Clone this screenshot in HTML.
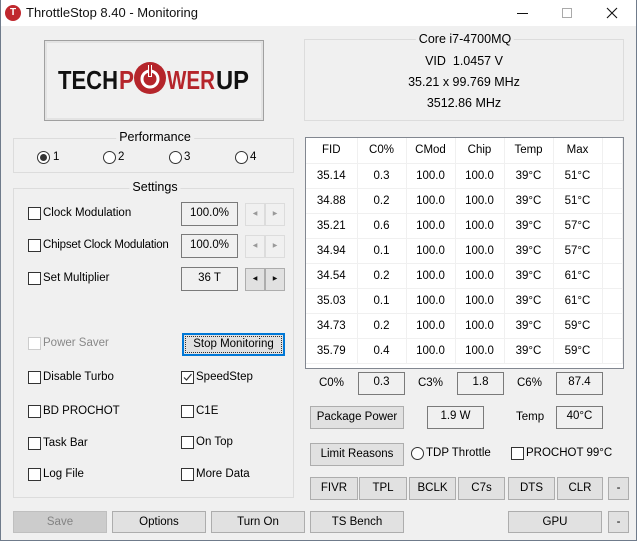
<!DOCTYPE html>
<html><head><meta charset="utf-8"><style>
*{box-sizing:border-box;margin:0;padding:0}
body{width:637px;height:541px;overflow:hidden;background:#f0f0f0;font-family:"Liberation Sans",Tahoma,sans-serif;font-size:11.5px;color:#000;position:relative}
.a{position:absolute}
.win{left:0;top:0;width:637px;height:541px;border:1px solid #6f7b8b;border-top:none}
.title{left:0;top:0;width:637px;height:26px;background:#fff}
.grp{position:absolute;border:1px solid #dcdcdc}
.gt{position:absolute;background:#f0f0f0;padding:0 3px;font-size:12.5px;top:-9px;transform:translateX(-50%);white-space:nowrap}
.cb{position:absolute;width:13px;height:13px;border:1px solid #333;background:#fff}
.lbl{position:absolute;white-space:nowrap}
.btn{position:absolute;background:#e1e1e1;border:1px solid #adadad;text-align:center;line-height:20px}
.box{position:absolute;border:1px solid #7a7a7a;background:#f0f0f0;text-align:center;line-height:18px}
.rad{position:absolute;width:13px;height:13px;border:1px solid #333;border-radius:50%;background:#fff}
.spin{position:absolute;width:20px;height:23px;border:1px solid #dcdcdc;background:#f0f0f0;font-size:6px;color:#999;text-align:center;line-height:21px}
table{border-collapse:collapse;table-layout:fixed}
td{width:49px;height:25px;text-align:center;border-right:1px solid #f0f0f0;border-bottom:1px solid #f0f0f0;font-size:11.5px;overflow:hidden}
</style></head><body>
<div class="a title"></div>
<div class="a win"></div>
<div class="a" style="left:5px;top:5px;width:16px;height:16px;border-radius:50%;background:#c0282e;color:#fff;font-weight:bold;font-size:10px;text-align:center;line-height:16px">T</div>
<div class="lbl" style="left:26px;top:5px;font-size:13px;color:#111">ThrottleStop 8.40 - Monitoring</div>
<div class="a" style="left:517px;top:13px;width:11px;height:1px;background:#111"></div>
<div class="a" style="left:562px;top:8px;width:10px;height:10px;border:1px solid #aaa"></div>
<svg class="a" style="left:606px;top:7px" width="12" height="12"><path d="M1 1L11 11M11 1L1 11" stroke="#111" stroke-width="1.1"/></svg>

<!-- logo -->
<div class="a" style="left:44px;top:40px;width:220px;height:81px;border:1px solid #a0a0a0;background:#e3e3e3;padding:2px"><div style="width:100%;height:100%;background:#f0f0f0"></div></div>
<svg class="a" style="left:58px;top:62px" width="192" height="34">
<text x="0" y="27" font-family="Liberation Sans" font-weight="bold" font-size="26" fill="#111" textLength="60" lengthAdjust="spacingAndGlyphs">TECH</text>
<text x="61" y="27" font-family="Liberation Sans" font-weight="bold" font-size="26" fill="#b5252b" textLength="15" lengthAdjust="spacingAndGlyphs">P</text>
<circle cx="92" cy="16" r="16" fill="#b5252b"/>
<circle cx="92" cy="17" r="8" fill="none" stroke="#fff" stroke-width="3"/>
<rect x="90" y="3" width="4" height="12" fill="#fff"/>
<rect x="91" y="3" width="2" height="11" fill="#b5252b"/>
<text x="109" y="27" font-family="Liberation Sans" font-weight="bold" font-size="26" fill="#b5252b" textLength="48" lengthAdjust="spacingAndGlyphs">WER</text>
<text x="158" y="27" font-family="Liberation Sans" font-weight="bold" font-size="26" fill="#111" textLength="33" lengthAdjust="spacingAndGlyphs">UP</text>
</svg>

<!-- CPU info -->
<div class="grp" style="left:304px;top:39px;width:320px;height:82px"><span class="gt" style="left:160px;top:-8px">Core i7-4700MQ</span></div>
<div class="lbl" style="left:304px;width:320px;text-align:center;top:54px;font-size:12.5px">VID&nbsp; 1.0457 V</div>
<div class="lbl" style="left:304px;width:320px;text-align:center;top:75px;font-size:12.5px">35.21 x 99.769 MHz</div>
<div class="lbl" style="left:304px;width:320px;text-align:center;top:96px;font-size:12.5px">3512.86 MHz</div>

<!-- Performance -->
<div class="grp" style="left:13px;top:138px;width:281px;height:35px"><span class="gt" style="left:141px">Performance</span></div>
<div class="rad" style="left:37px;top:151px"><div style="margin:2px;width:7px;height:7px;border-radius:50%;background:#333"></div></div><div class="lbl" style="left:53px;top:151px">1</div>
<div class="rad" style="left:103px;top:151px"></div><div class="lbl" style="left:118px;top:151px">2</div>
<div class="rad" style="left:169px;top:151px"></div><div class="lbl" style="left:184px;top:151px">3</div>
<div class="rad" style="left:235px;top:151px"></div><div class="lbl" style="left:250px;top:151px">4</div>

<!-- Settings -->
<div class="grp" style="left:13px;top:188px;width:281px;height:310px"><span class="gt" style="left:141px">Settings</span></div>
<div class="cb" style="left:28px;top:207px"></div><div class="lbl" style="left:43px;top:207px">Clock Modulation</div>
<div class="box" style="left:181px;top:202px;width:57px;height:24px;line-height:21px">100.0%</div>
<div class="spin" style="left:245px;top:203px">◀</div><div class="spin" style="left:265px;top:203px">▶</div>
<div class="cb" style="left:28px;top:239px"></div><div class="lbl" style="left:43px;top:239px;letter-spacing:-0.2px">Chipset Clock Modulation</div>
<div class="box" style="left:181px;top:234px;width:57px;height:24px;line-height:21px">100.0%</div>
<div class="spin" style="left:245px;top:235px">◀</div><div class="spin" style="left:265px;top:235px">▶</div>
<div class="cb" style="left:28px;top:272px"></div><div class="lbl" style="left:43px;top:272px">Set Multiplier</div>
<div class="box" style="left:181px;top:267px;width:57px;height:24px;line-height:21px">36 T</div>
<div class="spin" style="left:245px;top:268px;border-color:#adadad;background:#e1e1e1;color:#111">◀</div><div class="spin" style="left:265px;top:268px;border-color:#adadad;background:#e1e1e1;color:#111">▶</div>

<div class="cb" style="left:28px;top:337px;border-color:#ccc"></div><div class="lbl" style="left:43px;top:337px;color:#888">Power Saver</div>
<div class="btn" style="left:182px;top:333px;width:103px;height:23px;border:2px solid #0078d7"><div style="border:1px dotted #333;height:17px;line-height:15px;margin:1px">Stop Monitoring</div></div>
<div class="cb" style="left:28px;top:371px"></div><div class="lbl" style="left:43px;top:371px">Disable Turbo</div>
<div class="cb" style="left:181px;top:371px"><svg width="11" height="11" style="position:absolute;left:0;top:0"><path d="M2 5.5L4.5 8L9.5 2" stroke="#333" fill="none" stroke-width="1.2"/></svg></div><div class="lbl" style="left:196px;top:371px">SpeedStep</div>
<div class="cb" style="left:28px;top:405px"></div><div class="lbl" style="left:43px;top:405px">BD PROCHOT</div>
<div class="cb" style="left:181px;top:405px"></div><div class="lbl" style="left:196px;top:405px">C1E</div>
<div class="cb" style="left:28px;top:437px"></div><div class="lbl" style="left:43px;top:437px">Task Bar</div>
<div class="cb" style="left:181px;top:436px"></div><div class="lbl" style="left:196px;top:436px">On Top</div>
<div class="cb" style="left:28px;top:468px"></div><div class="lbl" style="left:43px;top:468px">Log File</div>
<div class="cb" style="left:181px;top:468px"></div><div class="lbl" style="left:196px;top:468px">More Data</div>

<!-- table -->
<div class="a" style="left:305px;top:137px;width:319px;height:232px;border:1px solid #828790;background:#fff;overflow:hidden">
<table style="width:316px">
<colgroup><col style="width:51px"><col style="width:49px"><col style="width:49px"><col style="width:49px"><col style="width:49px"><col style="width:49px"><col style="width:20px"></colgroup>
<tr><td>FID</td><td>C0%</td><td>CMod</td><td>Chip</td><td>Temp</td><td>Max</td><td></td></tr>
<tr><td>35.14</td><td>0.3</td><td>100.0</td><td>100.0</td><td>39°C</td><td>51°C</td><td></td></tr>
<tr><td>34.88</td><td>0.2</td><td>100.0</td><td>100.0</td><td>39°C</td><td>51°C</td><td></td></tr>
<tr><td>35.21</td><td>0.6</td><td>100.0</td><td>100.0</td><td>39°C</td><td>57°C</td><td></td></tr>
<tr><td>34.94</td><td>0.1</td><td>100.0</td><td>100.0</td><td>39°C</td><td>57°C</td><td></td></tr>
<tr><td>34.54</td><td>0.2</td><td>100.0</td><td>100.0</td><td>39°C</td><td>61°C</td><td></td></tr>
<tr><td>35.03</td><td>0.1</td><td>100.0</td><td>100.0</td><td>39°C</td><td>61°C</td><td></td></tr>
<tr><td>34.73</td><td>0.2</td><td>100.0</td><td>100.0</td><td>39°C</td><td>59°C</td><td></td></tr>
<tr><td>35.79</td><td>0.4</td><td>100.0</td><td>100.0</td><td>39°C</td><td>59°C</td><td></td></tr>
</table></div>

<div class="lbl" style="left:319px;top:377px">C0%</div><div class="box" style="left:358px;top:372px;width:47px;height:23px">0.3</div>
<div class="lbl" style="left:418px;top:377px">C3%</div><div class="box" style="left:457px;top:372px;width:47px;height:23px">1.8</div>
<div class="lbl" style="left:517px;top:377px">C6%</div><div class="box" style="left:556px;top:372px;width:47px;height:23px">87.4</div>

<div class="btn" style="left:310px;top:406px;width:94px;height:23px">Package Power</div>
<div class="box" style="left:427px;top:406px;width:57px;height:23px">1.9 W</div>
<div class="lbl" style="left:516px;top:411px">Temp</div>
<div class="box" style="left:556px;top:406px;width:47px;height:23px">40°C</div>

<div class="btn" style="left:310px;top:443px;width:94px;height:23px">Limit Reasons</div>
<div class="rad" style="left:411px;top:447px"></div><div class="lbl" style="left:426px;top:447px">TDP Throttle</div>
<div class="cb" style="left:511px;top:447px"></div><div class="lbl" style="left:526px;top:447px">PROCHOT 99°C</div>

<div class="btn" style="left:310px;top:477px;width:48px;height:23px">FIVR</div>
<div class="btn" style="left:359px;top:477px;width:48px;height:23px">TPL</div>
<div class="btn" style="left:409px;top:477px;width:47px;height:23px">BCLK</div>
<div class="btn" style="left:458px;top:477px;width:47px;height:23px">C7s</div>
<div class="btn" style="left:508px;top:477px;width:47px;height:23px">DTS</div>
<div class="btn" style="left:557px;top:477px;width:46px;height:23px">CLR</div>
<div class="btn" style="left:608px;top:477px;width:21px;height:23px">-</div>

<div class="btn" style="left:13px;top:511px;width:94px;height:22px;background:#cccccc;border-color:#bfbfbf;color:#838383">Save</div>
<div class="btn" style="left:112px;top:511px;width:94px;height:22px">Options</div>
<div class="btn" style="left:211px;top:511px;width:94px;height:22px">Turn On</div>
<div class="btn" style="left:310px;top:511px;width:94px;height:22px">TS Bench</div>
<div class="btn" style="left:508px;top:511px;width:94px;height:22px">GPU</div>
<div class="btn" style="left:608px;top:511px;width:21px;height:22px">-</div>
</body></html>
